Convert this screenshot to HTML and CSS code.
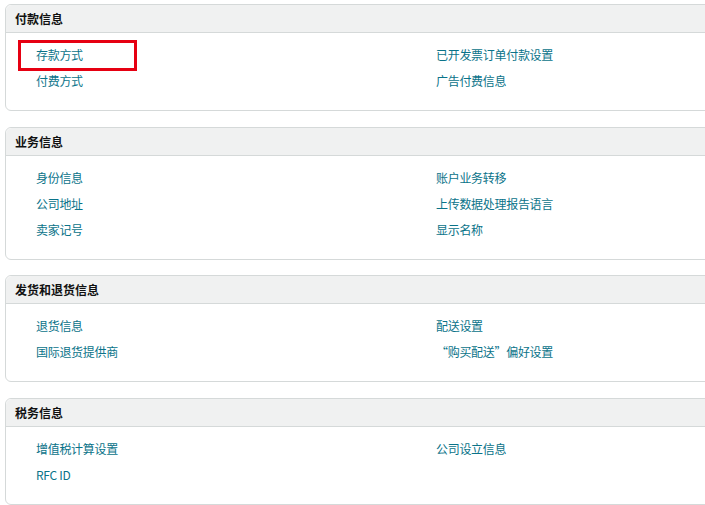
FILE: index.html
```html
<!DOCTYPE html>
<html lang="zh-CN">
<head>
<meta charset="utf-8">
<link rel="stylesheet" href="styles.css">
</head>
<body>
<div class="page">
  <section class="panel">
    <div class="panel-head">付款信息</div>
    <div class="panel-body">
      <a class="link highlight">存款方式</a>
      <a class="link">已开发票订单付款设置</a>
      <a class="link">付费方式</a>
      <a class="link">广告付费信息</a>
    </div>
  </section>
  <section class="panel">
    <div class="panel-head">业务信息</div>
    <div class="panel-body">
      <a class="link">身份信息</a>
      <a class="link">账户业务转移</a>
      <a class="link">公司地址</a>
      <a class="link">上传数据处理报告语言</a>
      <a class="link">卖家记号</a>
      <a class="link">显示名称</a>
    </div>
  </section>
  <section class="panel">
    <div class="panel-head">发货和退货信息</div>
    <div class="panel-body">
      <a class="link">退货信息</a>
      <a class="link">配送设置</a>
      <a class="link">国际退货提供商</a>
      <a class="link">“购买配送”偏好设置</a>
    </div>
  </section>
  <section class="panel">
    <div class="panel-head">税务信息</div>
    <div class="panel-body">
      <a class="link">增值税计算设置</a>
      <a class="link">公司设立信息</a>
      <a class="link">RFC ID</a>
    </div>
  </section>
</div>
</body>
</html>
```
FILE: styles.css
```css
html, body {
  margin: 0;
  padding: 0;
  background: #fff;
  overflow: hidden;
}
body {
  font-family: "Noto Sans CJK SC", "Noto Sans", sans-serif;
  font-size: 12px;
  color: #111;
}
.page {
  padding: 4px 0 0 5px;
  width: 730px;
  display: flex;
  flex-direction: column;
  gap: 15.6px;
}
.panel {
  border: 1px solid #d5d9d9;
  border-radius: 6px;
  background: #fff;
}
.panel-head {
  height: 27px;
  line-height: 27px;
  background: #f0f1f1;
  border-bottom: 1px solid #d5d9d9;
  border-radius: 6px 6px 0 0;
  padding-left: 9px;
  font-weight: bold;
  color: #111;
}
.panel-body {
  display: grid;
  grid-template-columns: 400px 1fr;
  grid-auto-rows: 26px;
  padding: 9px 0 16px 30px;
}
.link {
  color: #0a7389;
  line-height: 26px;
  letter-spacing: -0.3px;
  cursor: pointer;
  position: relative;
  justify-self: start;
}
.highlight::after {
  content: "";
  position: absolute;
  left: -18px;
  top: -2px;
  width: 113px;
  height: 25px;
  border: 3px solid #e60012;
}
```
